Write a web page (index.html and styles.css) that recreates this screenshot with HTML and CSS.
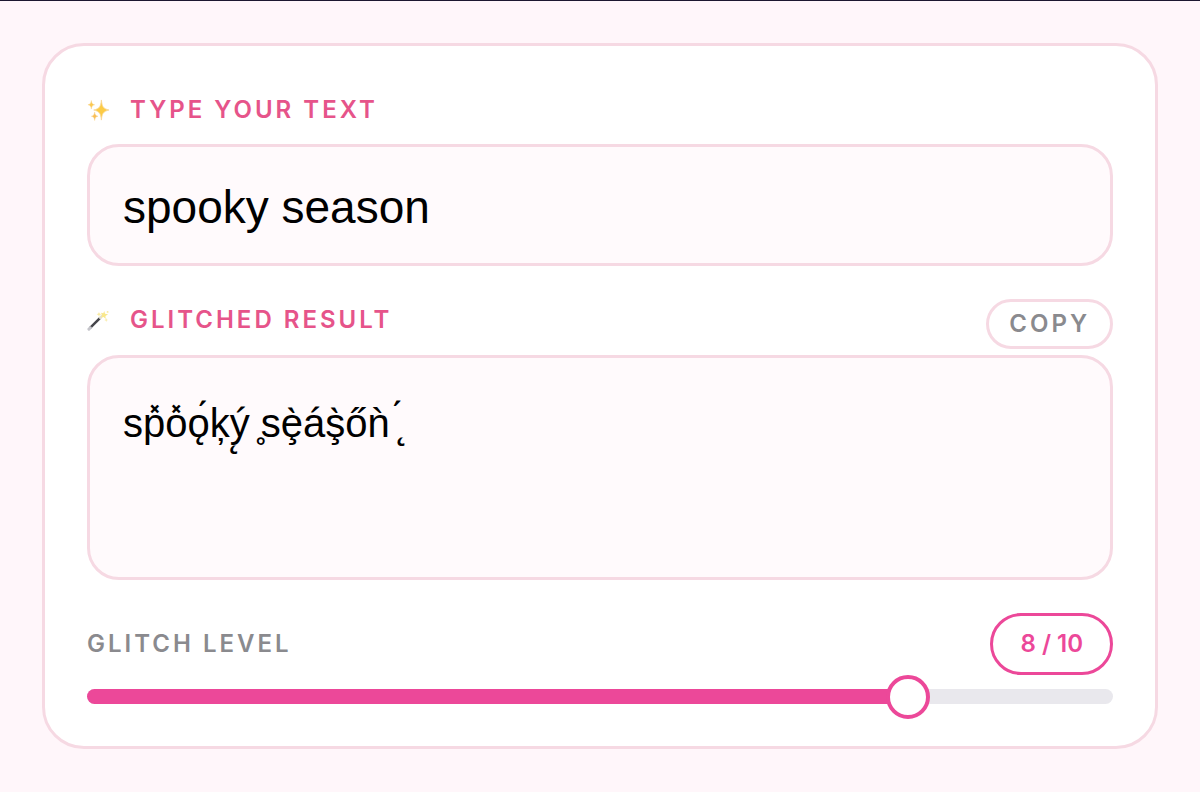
FILE: index.html
```html
<!DOCTYPE html>
<html lang="en">
<head>
	<meta charset="utf-8">
	<title>Glitch Text</title>
	<meta name="viewport" content="width=device-width, initial-scale=1.0">
	<link rel="stylesheet" href="styles.css">
</head>
<body>

	<main class="card">

		<div class="head">
			<svg class="icon" viewBox="0 0 24 24" aria-hidden="true">
				<path fill="#fccb45" stroke="#f9d795" stroke-width="0.8" d="M15 1C15.900 8 16.500 9.800 23 11.500C16.500 13.200 15.900 15 15 22C14.100 15 13.500 13.200 7 11.500C13.500 9.800 14.100 8 15 1Z"/>
				<path fill="#fbc94f" stroke="#f9d795" stroke-width="0.5" d="M4.500 1.500C5 4.500 5.500 5.300 8 6C5.500 6.700 5 7.500 4.500 10.500C4 7.500 3.500 6.700 1 6C3.500 5.300 4 4.500 4.500 1.500Z"/>
				<path fill="#f9be55" stroke="#f9d795" stroke-width="0.5" d="M8 13.500C8.500 16.500 9 17.300 11.500 18C9 18.700 8.500 19.500 8 22.500C7.500 19.500 7 18.700 4.500 18C7 17.300 7.500 16.500 8 13.500Z"/>
			</svg>
			<label for="text">TYPE YOUR TEXT</label>
		</div>
		<input class="field" type="text" id="text" value="spooky season" autocomplete="off" spellcheck="false">

		<div class="head result-head">
			<svg class="icon" viewBox="0 0 24 24" aria-hidden="true">
				<path stroke="#45454b" stroke-width="2.600" d="M3 20L14 9"/>
				<path stroke="#c4c4ca" stroke-width="3" stroke-linecap="round" d="M2 21L3.500 19.500"/>
				<path stroke="#e3e0d2" stroke-width="2.600" d="M13 10L16.500 6.500"/>
				<path fill="#f9e88c" d="M18 2L18.800 5L22 5.500L19.300 7.200L19.500 10.500L17.300 8.300L14.500 9L15.800 6.300L14.500 4L17 4.500Z"/>
				<path fill="#f9eaa0" d="M12.500 3L13.200 4.800L15 5.500L13.200 6.200L12.500 8L11.800 6.200L10 5.500L11.800 4.800ZM20 9.500L20.500 11L22 11.500L20.500 12L20 13.500L19.500 12L18 11.500L19.500 11Z"/>
				<circle cx="21.500" cy="3" r="1" fill="#f9eaa0"/>
			</svg>
			<label for="result">GLITCHED RESULT</label>
			<button class="copy" type="button" id="copy">COPY</button>
		</div>
		<div class="field result">
			<output class="glitched" id="result" for="text level">sp&#x33d;o&#x33d;o&#x328;&#x301;k&#x327;y&#x328;&#x301; &#x325;se&#x327;&#x300;a&#x301;s&#x327;&#x300;o&#x30b;n&#x300; &#x328;&#x301;</output>
		</div>

		<div class="level-head">
			<label for="level">GLITCH LEVEL</label>
			<span class="badge" id="count">8 / 10</span>
		</div>
		<div class="slider">
			<div class="fill" id="fill" style="width: 80%"></div>
			<input type="range" id="level" min="0" max="10" value="8">
		</div>

	</main>

	<script src="script.js"></script>

</body>
</html>
```

FILE: styles.css
```css
*{
	box-sizing: border-box;
}
body{
	margin: 0px;
	padding: 42px;
	background: #fff6fa;
	border-top: 1px solid #1d1730;
	font-family: Inter, sans-serif;
}

.card{
	padding: 42px;
	background: #ffffff;
	border: 3px solid #f6d9e3;
	border-radius: 42px;
}

.head{
	display: flex;
	align-items: center;
	height: 44px;
	margin-bottom: 12px;
	color: #e6548a;
}

.icon{
	width: 23px;
	height: 23px;
	margin-right: 20px;
	fill: none;
}

label,.copy{
	font-size: 24px;
	line-height: 30px;
	font-weight: 600;
	letter-spacing: 3px;
}

.field{
	display: block;
	width: 100%;
	height: 122px;
	padding: 3px 33px 0px;
	background: #fffafc;
	border: 3px solid #f6d9e3;
	border-radius: 32px;
	outline: none;
	color: #000000;
	font-family: "Liberation Sans", Arial, sans-serif;
	font-size: 46px;
}

.result-head{
	height: 50px;
	margin-top: 33px;
	margin-bottom: 6px;
}

.result-head label,.result-head .icon{
	margin-bottom: 8px;
}

.copy{
	height: 50px;
	margin-left: auto;
	padding: 0px 20px;
	background: #ffffff;
	border: 3px solid #f6d9e3;
	border-radius: 25px;
	color: #8a8a8e;
	font-family: inherit;
	cursor: pointer;
}

.result{
	height: 225px;
	padding-top: 40px;
	font-size: 40px;
}

.glitched{
	display: block;
	line-height: 50px;
}

.level-head{
	display: flex;
	justify-content: space-between;
	align-items: center;
	margin-top: 33px;
	color: #8a8a8e;
}

.badge{
	padding: 13px 27px;
	border: 3px solid #ec4899;
	border-radius: 31px;
	color: #ec4899;
	font-size: 24px;
	line-height: 30px;
	font-weight: 600;
}

.slider{
	height: 15px;
	margin-top: 14px;
	background: #e9e8ed;
	border-radius: 8px;
}

.fill{
	height: 15px;
	background: #ec4899;
	border-radius: 8px;
}

/* wider than the track, so the thumb is centered on the end of the fill */
.slider input{
	-webkit-appearance: none;
	appearance: none;
	position: relative;
	display: block;
	width: calc(100% + 44px);
	height: 44px;
	margin: -29px -22px 0px;
	background: transparent;
	outline: none;
	cursor: pointer;
}

.slider input::-webkit-slider-thumb{
	-webkit-appearance: none;
	width: 44px;
	height: 44px;
	background: #ffffff;
	border: 4px solid #ec4899;
	border-radius: 50%;
}

@media screen and (max-width: 600px){
	body{
		padding: 16px;
	}
	.card{
		padding: 20px;
	}
	label,.copy,.badge{
		font-size: 16px;
		letter-spacing: 1px;
	}
}
```

FILE: script.js
```js
let text = document.querySelector("#text")
let result = document.querySelector("#result")
let level = document.querySelector("#level")

let marks = ["\u0300","\u0301","\u030b","\u033d","\u0325","\u0327","\u0328"];

let glitch = ()=>{

	let out = "";

	for(let letter of text.value){
		out += letter;
		for(let i = 0; i < 3; i++){
			if(Math.random() * 12 < level.value){
				out += marks[Math.floor(Math.random() * marks.length)];
			}
		}
	}

	result.textContent = out;
	document.querySelector("#count").textContent = level.value + " / 10";
	document.querySelector("#fill").style.width = level.value * 10 + "%";
}

text.oninput = glitch;
level.oninput = glitch;

document.querySelector("#copy").onclick = ()=>{
	navigator.clipboard.writeText(result.textContent);
}
```
